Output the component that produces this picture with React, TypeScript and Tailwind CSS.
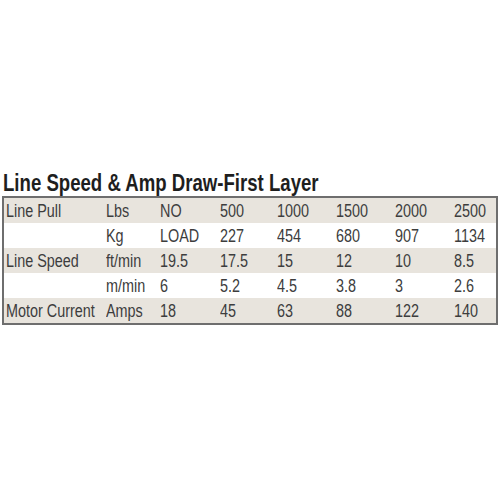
const rows: { label: string; unit: string; values: string[]; shaded: boolean }[] = [
  { label: 'Line Pull', unit: 'Lbs', values: ['NO', '500', '1000', '1500', '2000', '2500'], shaded: true },
  { label: '', unit: 'Kg', values: ['LOAD', '227', '454', '680', '907', '1134'], shaded: false },
  { label: 'Line Speed', unit: 'ft/min', values: ['19.5', '17.5', '15', '12', '10', '8.5'], shaded: true },
  { label: '', unit: 'm/min', values: ['6', '5.2', '4.5', '3.8', '3', '2.6'], shaded: false },
  { label: 'Motor Current', unit: 'Amps', values: ['18', '45', '63', '88', '122', '140'], shaded: true },
];

// condensed look: no narrow font installed, so squeeze horizontally
function Cell({ text }: { text: string }) {
  return (
    <span className="whitespace-nowrap">
      <span className="inline-block origin-left scale-x-[0.8]">{text}</span>
    </span>
  );
}

export default function App() {
  return (
    <div
      className="h-[500px] w-[500px] bg-white pt-[170px] text-[#3d3d3d]"
      style={{ fontFamily: '"Liberation Sans", Arial, sans-serif' }}
    >
      <h2 className="whitespace-nowrap pl-[3px] text-[24px] font-bold leading-[26px] text-[#1e1e1e]">
        <span className="inline-block origin-left scale-x-[0.775]">Line Speed &amp; Amp Draw-First Layer</span>
      </h2>
      <div className="mx-[2px] border-2 border-[#6e6e6e]">
        {rows.map((r, i) => (
          <div
            key={i}
            className={`grid h-[25px] grid-cols-[100px_54px_60px_57px_59px_59px_59px_1fr] items-center pl-[2px] text-[18px] leading-none ${
              r.shaded ? 'bg-[#e8e4dd]' : 'bg-white'
            }`}
          >
            <Cell text={r.label} />
            <Cell text={r.unit} />
            {r.values.map((v, j) => (
              <Cell key={j} text={v} />
            ))}
          </div>
        ))}
      </div>
    </div>
  );
}
